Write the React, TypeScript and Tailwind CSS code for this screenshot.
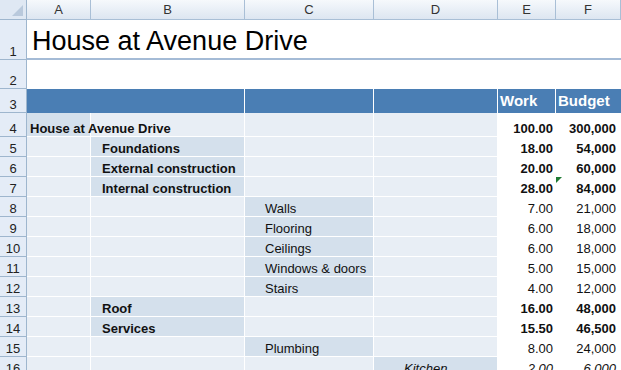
import React from "react";

type Row = {
  n: number;
  col: "A" | "B" | "C" | "D";
  label: string;
  work: string;
  budget: string;
  bold?: boolean;
  italic?: boolean;
  flag?: boolean;
};

const rows: Row[] = [
  { n: 4, col: "A", label: "House at Avenue Drive", work: "100.00", budget: "300,000", bold: true },
  { n: 5, col: "B", label: "Foundations", work: "18.00", budget: "54,000", bold: true },
  { n: 6, col: "B", label: "External construction", work: "20.00", budget: "60,000", bold: true },
  { n: 7, col: "B", label: "Internal construction", work: "28.00", budget: "84,000", bold: true, flag: true },
  { n: 8, col: "C", label: "Walls", work: "7.00", budget: "21,000" },
  { n: 9, col: "C", label: "Flooring", work: "6.00", budget: "18,000" },
  { n: 10, col: "C", label: "Ceilings", work: "6.00", budget: "18,000" },
  { n: 11, col: "C", label: "Windows & doors", work: "5.00", budget: "15,000" },
  { n: 12, col: "C", label: "Stairs", work: "4.00", budget: "12,000" },
  { n: 13, col: "B", label: "Roof", work: "16.00", budget: "48,000", bold: true },
  { n: 14, col: "B", label: "Services", work: "15.50", budget: "46,500", bold: true },
  { n: 15, col: "C", label: "Plumbing", work: "8.00", budget: "24,000" },
  { n: 16, col: "D", label: "Kitchen", work: "2.00", budget: "6,000", italic: true },
];

const RowNum = ({ n, h }: { n: number; h: string }) => (
  <div className={`${h} flex items-end justify-center bg-[#e4ecf7] border-r border-b border-[#9eb6ce] text-[13px] leading-[14px] text-[#222]`}>
    {n}
  </div>
);

const ColHead = ({ label }: { label: string }) => (
  <div className="h-[20px] flex items-center justify-center bg-gradient-to-b from-[#f6f9fc] to-[#dde6f1] border-r border-b border-[#a9bfd6] text-[13px] text-[#333]">
    {label}
  </div>
);

const labelPad: Record<string, string> = {
  A: "pl-[3px]",
  B: "pl-[11px]",
  C: "pl-[20px]",
  D: "pl-[30px]",
};

export default function App() {
  return (
    <div className="w-[621px] h-[370px] overflow-hidden bg-white font-['Liberation_Sans',Arial,sans-serif]">
      <div className="grid grid-cols-[27px_64px_154px_129px_124px_58px_65px]">
        {/* COLUMN HEADERS */}
        <div className="h-[20px] relative bg-[#dfe8f3] border-r border-b border-[#9eb6ce]">
          <div className="absolute right-[3px] bottom-[3px] w-0 h-0 border-l-[11px] border-l-transparent border-b-[11px] border-b-[#b9c9dc]" />
        </div>
        {["A", "B", "C", "D", "E", "F"].map((c) => (
          <ColHead key={c} label={c} />
        ))}

        {/* ROW 1 TITLE */}
        <RowNum n={1} h="h-[40px]" />
        <div className="col-span-6 h-[40px] flex items-end pl-[5px] pb-[1px] border-b-2 border-[#a4bbd6] text-[27px] leading-[32px] text-black whitespace-nowrap">
          House at Avenue Drive
        </div>

        {/* ROW 2 */}
        <RowNum n={2} h="h-[29px]" />
        <div className="col-span-6 h-[29px] bg-white" />

        {/* ROW 3 HEADER */}
        <RowNum n={3} h="h-[24px]" />
        <div className="col-span-2 h-[24px] bg-[#4a7eb4] border-r border-white" />
        <div className="h-[24px] bg-[#4a7eb4] border-r border-white" />
        <div className="h-[24px] bg-[#4a7eb4] border-r border-white" />
        <div className="h-[24px] flex items-center pl-[2px] pt-[1px] bg-[#4a7eb4] border-r border-white text-[15px] font-bold text-white">
          Work
        </div>
        <div className="h-[24px] flex items-center pl-[2px] pt-[1px] bg-[#4a7eb4] text-[15px] font-bold text-white">
          Budget
        </div>

        {/* DATA ROWS */}
        {rows.map((r) => {
          const h = r.n === 4 ? "h-[24px]" : "h-[20px]";
          const text = `${r.bold ? "font-bold" : ""} ${r.italic ? "italic" : ""}`;
          return (
            <React.Fragment key={r.n}>
              <RowNum n={r.n} h={h} />
              {(["A", "B", "C", "D"] as const).map((c) => (
                <div
                  key={c}
                  className={`${h} flex items-end border-r border-b border-white text-[13px] leading-[14px] text-[#111] whitespace-nowrap ${
                    r.col === c ? "bg-[#d4e0ec] relative z-10" : "bg-[#e8eef5]"
                  } ${labelPad[c]} ${text}`}
                >
                  {r.col === c ? r.label : null}
                </div>
              ))}
              <div className={`${h} flex items-end justify-end pr-[3px] bg-white border-b border-white text-[13px] leading-[14px] text-[#111] ${text}`}>
                {r.work}
              </div>
              <div className={`${h} relative flex items-end justify-end pr-[5px] bg-white border-b border-white text-[13px] leading-[14px] text-[#111] ${text}`}>
                {r.flag && (
                  <div className="absolute left-0 top-0 w-0 h-0 border-t-[6px] border-t-[#1e7b34] border-r-[6px] border-r-transparent" />
                )}
                {r.budget}
              </div>
            </React.Fragment>
          );
        })}
      </div>
    </div>
  );
}
